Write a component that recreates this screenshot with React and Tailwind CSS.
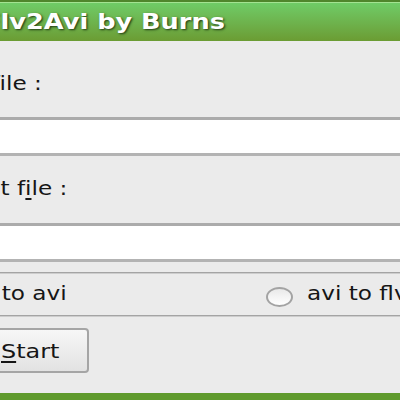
import React from 'react';

const font = { fontFamily: '"DejaVu Sans", "Liberation Sans", sans-serif' };

// the window was captured stretched sideways, so text is widened a bit
function Wide({ children, className = '' }) {
  return (
    <span className={`inline-block origin-left scale-x-[1.22] whitespace-nowrap ${className}`}>
      {children}
    </span>
  );
}

// mnemonic letter with its underline
function Key({ children }) {
  return <span className="inline-block border-b-2 border-[#161616] leading-[19px]">{children}</span>;
}

function Entry() {
  return (
    <div className="h-[39px] w-full bg-white border-t-[3px] border-b-[3px] border-t-[#ababab] border-b-[#b3b3b3]" />
  );
}

function Separator() {
  return (
    <div className="w-full">
      <div className="h-px bg-[#a4a4a4]" />
      <div className="h-px bg-[#cdcdcd]" />
    </div>
  );
}

function Radio({ checked = false }) {
  return (
    <div className="mt-[13px] flex h-[20px] w-[27px] shrink-0 items-center justify-center rounded-[50%] border-2 border-[#a3a3a3] bg-gradient-to-b from-[#e9e9e9] to-white">
      {checked && <div className="h-[8px] w-[10px] rounded-[50%] bg-[#2c2c2c]" />}
    </div>
  );
}

export default function App() {
  return (
    <div
      className="flex h-[400px] w-[400px] flex-col overflow-hidden bg-[#ebebeb] text-[19px] text-[#161616]"
      style={font}
    >
      {/* title bar */}
      <div className="h-[41px] shrink-0 border-t-2 border-t-[#4f862c] bg-gradient-to-b from-[#6fcd68] to-[#6b9c33] shadow-[inset_0_1px_0_#a3e391]">
        <div className="-ml-[17px] pt-[8px] text-[21px] font-bold leading-[24px] text-white [text-shadow:1px_1px_2px_#1f3a12]">
          <Wide className="scale-x-[1.2]">Flv2Avi by Burns</Wide>
        </div>
      </div>

      {/* input file */}
      <div className="h-[76px] shrink-0 pt-[31px] leading-[22px]">
        <div className="-ml-[76px]">
          <Wide>
            Input <Key>f</Key>ile :
          </Wide>
        </div>
      </div>
      <Entry />

      {/* output file */}
      <div className="h-[67px] shrink-0 pt-[21px] leading-[22px]">
        <div className="-ml-[71px]">
          <Wide>
            Output f<Key>i</Key>le :
          </Wide>
        </div>
      </div>
      <Entry />

      <div className="h-[10px] shrink-0" />
      <Separator />

      {/* conversion mode */}
      <div className="grid h-[41px] shrink-0 grid-cols-[266px_1fr] leading-[22px]">
        <div className="-ml-[75px] flex gap-[14px] pt-[8px]">
          <div className="-mt-[8px]">
            <Radio checked />
          </div>
          <Wide>flv to avi</Wide>
        </div>
        <div className="flex gap-[14px] pt-[8px]">
          <div className="-mt-[8px]">
            <Radio />
          </div>
          <Wide>avi to flv</Wide>
        </div>
      </div>
      <Separator />

      {/* start */}
      <div className="flex h-[76px] shrink-0 items-start pt-[11px]">
        <button className="-ml-[30px] flex h-[45px] w-[119px] items-center rounded-[4px] border-2 border-[#a5a5a5] bg-gradient-to-b from-[#f7f7f7] to-[#e2e2e2] pl-[29px] leading-[22px] text-[#161616]">
          <Wide className="pt-[2px] scale-x-[1.26]">
            <Key>S</Key>tart
          </Wide>
        </button>
      </div>

      <div className="flex-1 bg-[#5f9a2d]" />
    </div>
  );
}
